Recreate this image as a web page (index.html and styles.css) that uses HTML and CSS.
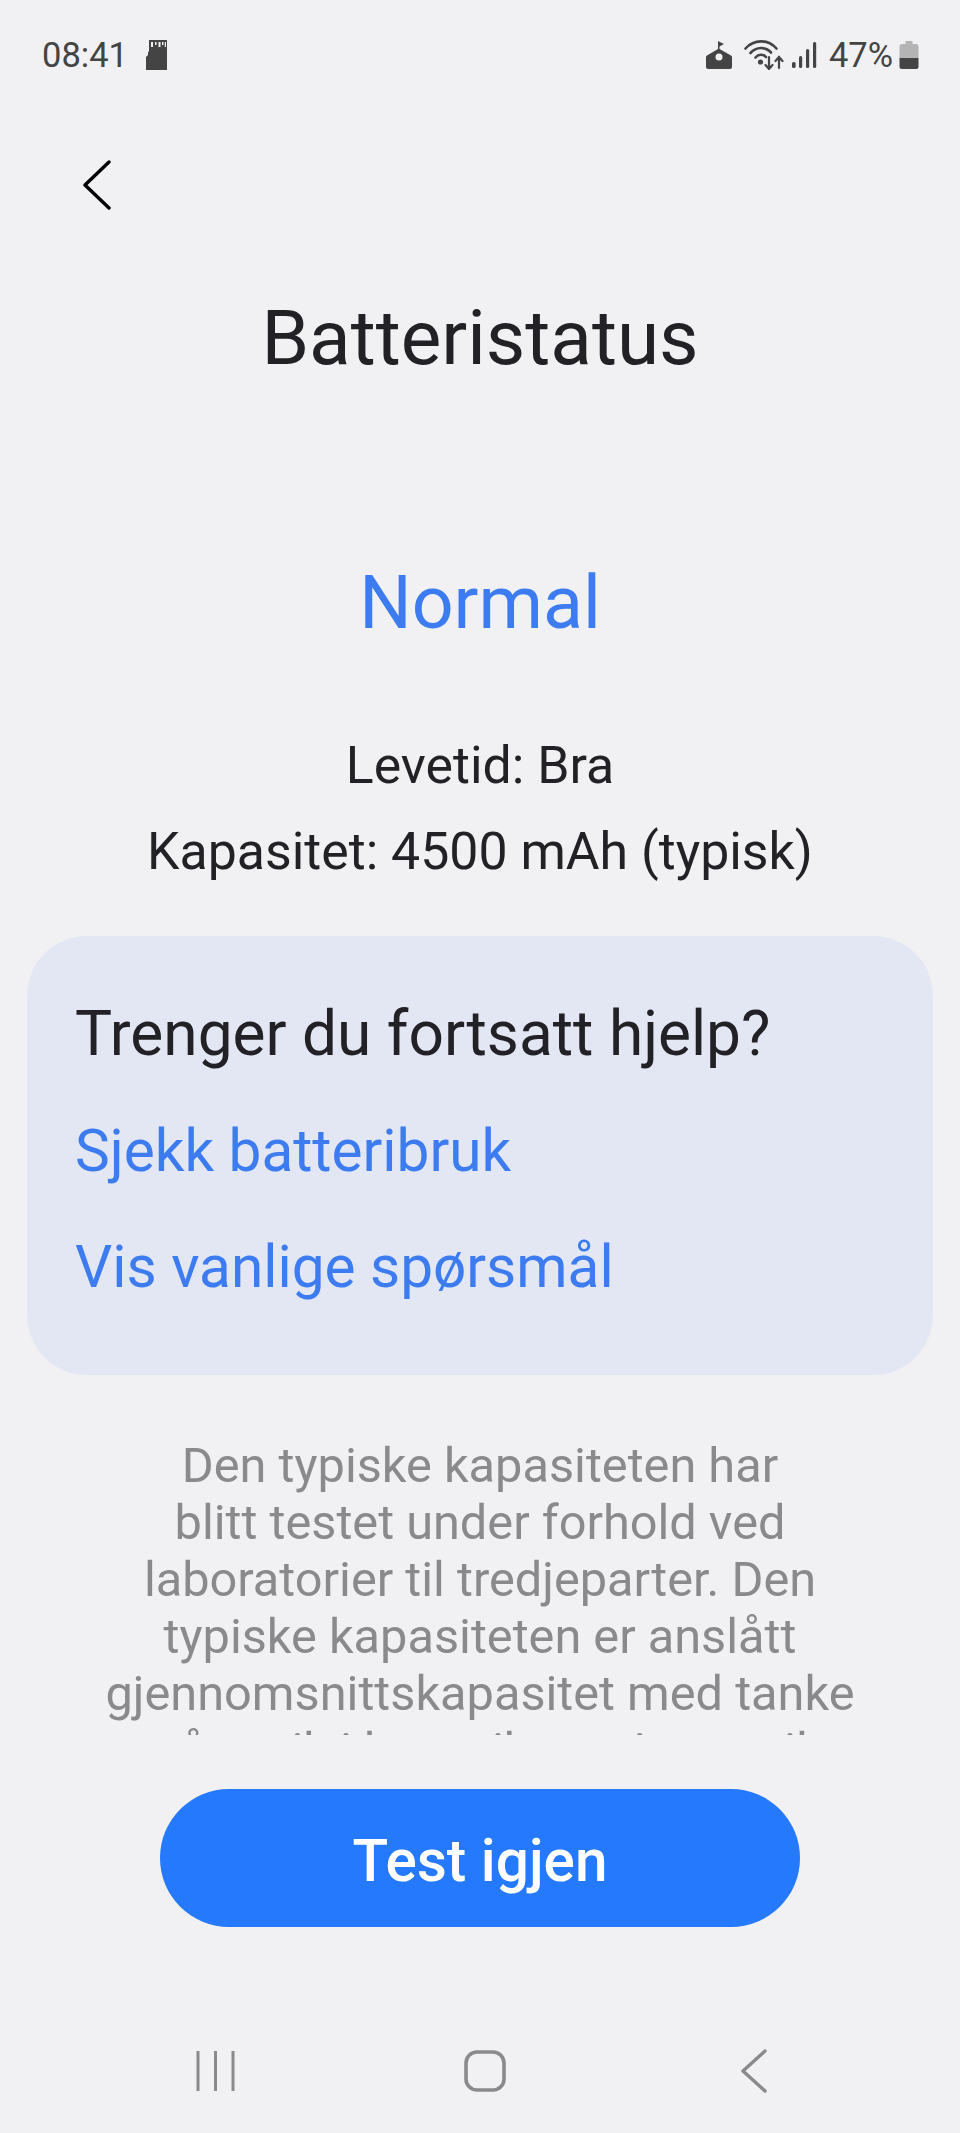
FILE: index.html
```html
<!DOCTYPE html>
<html lang="no">
<head>
  <meta charset="UTF-8">
  <meta name="viewport" content="width=device-width, initial-scale=1.0">
  <title>Batteristatus</title>
  <link rel="stylesheet" href="styles.css">
</head>
<body>
  <div class="phone">
    <div class="status-bar">
      <div class="status-left">
        <span class="time">08:41</span>
        <svg class="icon-sd" viewBox="0 0 21 30" aria-hidden="true">
          <path fill="#444" d="M3 0H21V30H0V17L2 15V12.500L3 11Z"/>
          <path fill="#f0f0f3" d="M5 2H7V7H5ZM9 2H10.500V5H9ZM12.500 2H14.500V7H12.500ZM16 2H17.500V5H16ZM18.800 2H20V7H18.800Z"/>
        </svg>
      </div>
      <div class="status-right">
        <svg class="icon-home" viewBox="0 0 26 29" aria-hidden="true">
          <path fill="#444" d="M12 0L18 3L13.500 5.500V8L25 14.500Q26 15 26 16V26Q26 28 24 28H2Q0 28 0 26V16Q0 15 1 14.500L12 8Z"/>
          <circle cx="13" cy="16" r="3.500" fill="#f0f0f3"/>
        </svg>
        <svg class="icon-wifi" viewBox="0 0 40 30" aria-hidden="true">
          <g fill="none" stroke="#444" stroke-width="2.600" stroke-linecap="round">
            <path d="M1.500 8.500C10 -1 24 -1 32.500 8.500"/>
            <path d="M6.500 13C12.500 6.500 21.500 6.500 27 12.500"/>
            <path d="M11.500 17.500C14.500 14 19.500 14 22 17"/>
            <path d="M25 17V28M21.500 25L25 29L28.500 25" stroke-width="2.200"/>
            <path d="M35 28V17M31.500 21L35 17L38.500 21" stroke-width="2.200"/>
          </g>
          <circle cx="16.500" cy="22" r="2.600" fill="#444"/>
        </svg>
        <svg class="icon-signal" viewBox="0 0 25 27" aria-hidden="true">
          <g fill="#444">
            <rect x="0" y="20" width="3.600" height="6" rx="1.500"/>
            <rect x="7" y="14" width="3.200" height="12" rx="1.500"/>
            <rect x="14" y="7" width="3.200" height="19" rx="1.500"/>
            <rect x="21" y="0" width="3.200" height="26" rx="1.500"/>
          </g>
        </svg>
        <span class="percent">47%</span>
        <svg class="icon-battery" viewBox="0 0 19 28" aria-hidden="true">
          <path fill="#b4b4b4" d="M6 0H13V3H16.500Q19 3 19 5.500V17H0V5.500Q0 3 2.500 3H6Z"/>
          <path fill="#444" d="M0 17H19V25.500Q19 28 16.500 28H2.500Q0 28 0 25.500Z"/>
        </svg>
      </div>
    </div>

    <div class="toolbar">
      <svg class="icon-back" viewBox="0 0 28 50" aria-hidden="true">
        <path fill="none" stroke="#000" stroke-width="3.400" stroke-linecap="round" stroke-linejoin="round" d="M26 2L2 25L26 48"/>
      </svg>
    </div>

    <h1 class="title">Batteristatus</h1>
    <div class="result">Normal</div>
    <div class="details">
      <p>Levetid: Bra</p>
      <p>Kapasitet: 4500 mAh (typisk)</p>
    </div>

    <div class="help-card">
      <h2>Trenger du fortsatt hjelp?</h2>
      <a href="#">Sjekk batteribruk</a>
      <a href="#">Vis vanlige spørsmål</a>
    </div>

    <div class="note">
      <p>Den typiske kapasiteten har<br>blitt testet under forhold ved<br>laboratorier til tredjeparter. Den<br>typiske kapasiteten er anslått<br>gjennomsnittskapasitet med tanke<br>på avvik i batterikapasiteten til</p>
    </div>

    <div class="actions">
      <button type="button">Test igjen</button>
    </div>

    <div class="nav-bar">
      <svg class="icon-recent" viewBox="0 0 39 42" aria-hidden="true">
        <path fill="none" stroke="#8a8a8c" stroke-width="3" d="M2 1V41M19.500 1V41M37 1V41"/>
      </svg>
      <svg class="icon-circle" viewBox="0 0 42 42" aria-hidden="true">
        <rect x="2" y="2" width="38" height="38" rx="11" fill="none" stroke="#8a8a8c" stroke-width="3.600"/>
      </svg>
      <svg class="icon-nav-back" viewBox="0 0 26 44" aria-hidden="true">
        <path fill="none" stroke="#8a8a8c" stroke-width="3.400" stroke-linecap="round" stroke-linejoin="round" d="M24 2L2 22L24 42"/>
      </svg>
    </div>
  </div>
</body>
</html>
```

FILE: styles.css
```css
* {
  box-sizing: border-box;
}

body {
  margin: 0;
  background: #f1f1f4;
  font-family: Roboto, "Liberation Sans", sans-serif;
  color: #222226;
}

.phone {
  width: 960px;
  height: 2133px;
  display: flex;
  flex-direction: column;
  overflow: hidden;
}

/* Status bar */
.status-bar {
  height: 110px;
  padding: 0 41px 0 42px;
  display: flex;
  justify-content: space-between;
  align-items: center;
  color: #444;
}

.status-left,
.status-right {
  display: flex;
  align-items: center;
}

.time,
.percent {
  font-size: 34.500px;
}

.icon-sd {
  width: 21px;
  height: 30px;
  margin-left: 18px;
}

.icon-home {
  width: 26px;
  height: 29px;
}

.icon-wifi {
  width: 40px;
  height: 30px;
  margin-left: 12px;
}

.icon-signal {
  width: 25px;
  height: 27px;
  margin-left: 8px;
}

.percent {
  margin-left: 12px;
}

.icon-battery {
  width: 20px;
  height: 28px;
  margin-left: 6px;
}

/* Header */
.toolbar {
  height: 74px;
  margin-top: 38px;
  padding-left: 83px;
  display: flex;
  align-items: center;
}

.icon-back {
  width: 28px;
  height: 50px;
}

.title {
  margin: 0;
  padding-top: 71px;
  text-align: center;
  font-size: 76.500px;
  font-weight: 400;
  line-height: 90px;
}

.result {
  margin-top: 175px;
  text-align: center;
  font-size: 73.500px;
  line-height: 90px;
  color: #3d7bf0;
}

.details {
  margin-top: 75px;
  text-align: center;
  font-size: 51.800px;
  line-height: 86px;
}

.details p {
  margin: 0;
}

/* Help card */
.help-card {
  margin: 41px 27px 0;
  height: 439px;
  padding: 62px 48px 0;
  border-radius: 60px;
  background: #e2e7f3;
  display: flex;
  flex-direction: column;
}

.help-card h2 {
  margin: 0;
  font-size: 62.200px;
  font-weight: 400;
  line-height: 72px;
}

.help-card a {
  margin-top: 45px;
  font-size: 58.500px;
  line-height: 72px;
  color: #3d7bf0;
  text-decoration: none;
}

.help-card a + a {
  margin-top: 44px;
}

/* Note text, cut off by the scroll area */
.note {
  height: 360px;
  padding-top: 62px;
  overflow: hidden;
  text-align: center;
  font-size: 48.700px;
  line-height: 57px;
  color: #8a8a8c;
}

.note p {
  margin: 0;
}

.actions {
  margin-top: 54px;
  display: flex;
  justify-content: center;
}

.actions button {
  width: 640px;
  height: 138px;
  padding-top: 6px;
  border: 0;
  border-radius: 69px;
  background: #2479fc;
  color: #fff;
  font-family: inherit;
  font-size: 58.500px;
  font-weight: 500;
}

/* Navigation bar */
.nav-bar {
  margin-top: 122px;
  display: flex;
  align-items: center;
  padding-left: 196px;
}

.icon-recent {
  width: 39px;
  height: 42px;
}

.icon-circle {
  width: 42px;
  height: 42px;
  margin-left: 229px;
}

.icon-nav-back {
  width: 26px;
  height: 44px;
  margin-left: 235px;
}
```
